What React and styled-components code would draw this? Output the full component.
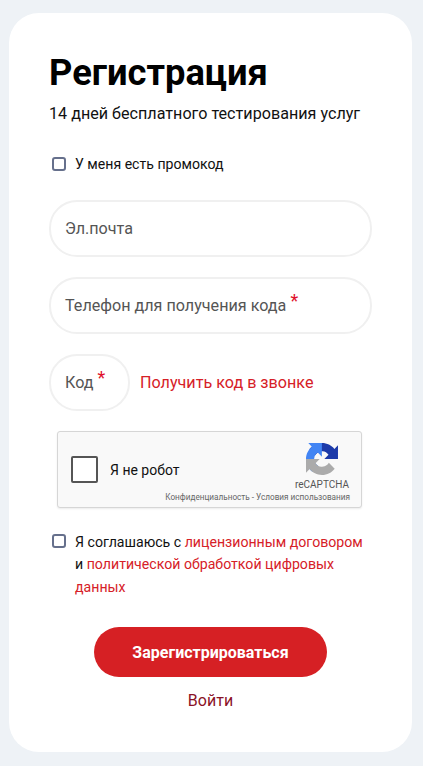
import React from "react";
import styled, { createGlobalStyle } from "styled-components";

const GlobalStyle = createGlobalStyle`
  html, body {
    margin: 0;
    padding: 0;
    background: #eef2f6;
  }
  * {
    box-sizing: border-box;
  }
`;

const RecaptchaLogo = () => (
  <svg width="32" height="32" viewBox="0 0 64 64">
    <path d="M64 31.955l-.033-1.37V4.687l-7.16 7.16C50.948 4.674 42.033.093 32.05.093c-10.4 0-19.622 4.96-25.458 12.64l11.736 11.86a15.55 15.55 0 0 1 4.754-5.334c2.05-1.6 4.952-2.906 8.968-2.906.485 0 .86.057 1.135.163 4.976.393 9.288 3.14 11.828 7.124l-8.307 8.307c10.522-.04 22.4-.066 27.295.005" fill="#1c3aa9" />
    <path d="M31.862.094l-1.37.033H4.594l7.16 7.16C4.58 13.147 0 22.06 0 32.046c0 10.4 4.96 19.622 12.64 25.458l11.86-11.736a15.55 15.55 0 0 1-5.334-4.754c-1.6-2.05-2.906-4.952-2.906-8.968 0-.485.057-.86.163-1.135.393-4.976 3.14-9.288 7.124-11.828l8.307 8.307c-.04-10.522-.066-22.4.005-27.295" fill="#4285f4" />
    <path d="M.001 32.045l.033 1.37v25.898l7.16-7.16c5.86 7.173 14.774 11.754 24.76 11.754 10.4 0 19.622-4.96 25.458-12.64l-11.736-11.86a15.55 15.55 0 0 1-4.754 5.334c-2.05 1.6-4.952 2.906-8.968 2.906-.485 0-.86-.057-1.135-.163-4.976-.393-9.288-3.14-11.828-7.124l8.307-8.307c-10.522.04-22.4.066-27.295-.005" fill="#ababab" />
  </svg>
);

const App = () => {
  return (
    <>
      <GlobalStyle />
      <Page>
        <Card>
          <Title>Регистрация</Title>
          <Subtitle>14 дней бесплатного тестирования услуг</Subtitle>
          <PromoRow>
            <Box />
            <span>У меня есть промокод</span>
          </PromoRow>
          <Fields>
            <Field>Эл.почта</Field>
            <Field>
              Телефон для получения кода<Star>*</Star>
            </Field>
            <CodeRow>
              <CodeField>
                Код<Star>*</Star>
              </CodeField>
              <CallLink>Получить код в звонке</CallLink>
            </CodeRow>
          </Fields>
          <Captcha>
            <CaptchaBox />
            <CaptchaLabel>Я не робот</CaptchaLabel>
            <CaptchaBrand>
              <RecaptchaLogo />
              <BrandName>reCAPTCHA</BrandName>
            </CaptchaBrand>
            <CaptchaLinks>Конфиденциальность - Условия использования</CaptchaLinks>
          </Captcha>
          <TermsRow>
            <TermsBox />
            <Terms>
              Я соглашаюсь с <TermsLink>лицензионным договором</TermsLink> и{" "}
              <TermsLink>политической обработкой цифровых данных</TermsLink>
            </Terms>
          </TermsRow>
          <Submit>Зарегистрироваться</Submit>
          <Login>Войти</Login>
        </Card>
      </Page>
    </>
  );
};

//styled components
const Page = styled.div`
  width: 423px;
  height: 766px;
  padding: 13px 11px 14px 9px;
  overflow: hidden;
  background: #eef2f6;
  font-family: Roboto, "Liberation Sans", sans-serif;
`;
const Card = styled.div`
  height: 739px;
  padding: 35px 40px 0;
  display: flex;
  flex-direction: column;
  background: #ffffff;
  border-radius: 30px;
`;
const Title = styled.h1`
  margin: 0;
  font-size: 36.3px;
  line-height: 50px;
  font-weight: 700;
  color: #000000;
`;
const Subtitle = styled.p`
  margin: 4px 0 0;
  font-size: 16.15px;
  line-height: 24px;
  color: #111111;
`;
const PromoRow = styled.label`
  margin-top: 27px;
  display: flex;
  align-items: center;
  gap: 9px;
  padding-left: 3px;
  height: 22px;
  font-size: 14.1px;
  color: #111111;
`;
const Box = styled.span`
  flex: none;
  width: 14px;
  height: 14px;
  background: #ffffff;
  border: 2px solid #66708c;
  border-radius: 3px;
`;
const Fields = styled.div`
  margin-top: 25px;
  display: flex;
  flex-direction: column;
  gap: 20px;
`;
const Field = styled.div`
  height: 57px;
  padding: 0 14px;
  display: flex;
  align-items: center;
  font-size: 16.15px;
  color: #555555;
  background: #ffffff;
  border: 2px solid #f0f0f0;
  border-radius: 28px;
`;
const Star = styled.span`
  margin: -10px 0 0 4px;
  font-size: 18px;
  line-height: 20px;
  color: #e0102c;
`;
const CodeRow = styled.div`
  display: flex;
  align-items: center;
  gap: 10px;
`;
const CodeField = styled(Field)`
  width: 81px;
`;
const CallLink = styled.a`
  font-size: 16.15px;
  color: #d62027;
`;
const Captcha = styled.div`
  position: relative;
  margin: 20px 0 0 8px;
  width: 305px;
  height: 77px;
  display: flex;
  align-items: center;
  padding: 0 12px 0 13px;
  background: #f9f9f9;
  border: 1px solid #d6d6d6;
  border-radius: 3px;
  box-shadow: 0 1px 2px rgba(0, 0, 0, 0.08);
`;
const CaptchaBox = styled.span`
  flex: none;
  width: 27px;
  height: 27px;
  background: #ffffff;
  border: 2px solid #555555;
  border-radius: 2px;
`;
const CaptchaLabel = styled.span`
  margin-left: 12px;
  font-size: 14px;
  color: #111111;
`;
const CaptchaBrand = styled.div`
  margin: -6px 0 0 auto;
  display: flex;
  flex-direction: column;
  align-items: center;
`;
const BrandName = styled.span`
  margin-top: 4px;
  font-size: 10px;
  color: #555555;
`;
const CaptchaLinks = styled.span`
  position: absolute;
  right: 11px;
  bottom: 5px;
  font-size: 8.2px;
  white-space: nowrap;
  color: #666666;
`;
const TermsRow = styled.div`
  margin-top: 23px;
  display: flex;
  align-items: flex-start;
  gap: 9px;
  padding: 0 8px 0 3px;
`;
const TermsBox = styled(Box)`
  margin-top: 3px;
`;
const Terms = styled.p`
  margin: 0;
  font-size: 14.15px;
  line-height: 22.4px;
  color: #111111;
`;
const TermsLink = styled.a`
  color: #d62027;
`;
const Submit = styled.button`
  align-self: center;
  margin-top: 29px;
  width: 233px;
  height: 50px;
  border: none;
  border-radius: 25px;
  background: #d62024;
  color: #ffffff;
  font-family: inherit;
  font-size: 16px;
  font-weight: 700;
`;
const Login = styled.a`
  align-self: center;
  margin-top: 13px;
  font-size: 16px;
  line-height: 22px;
  color: #8a1226;
`;

export default App;
